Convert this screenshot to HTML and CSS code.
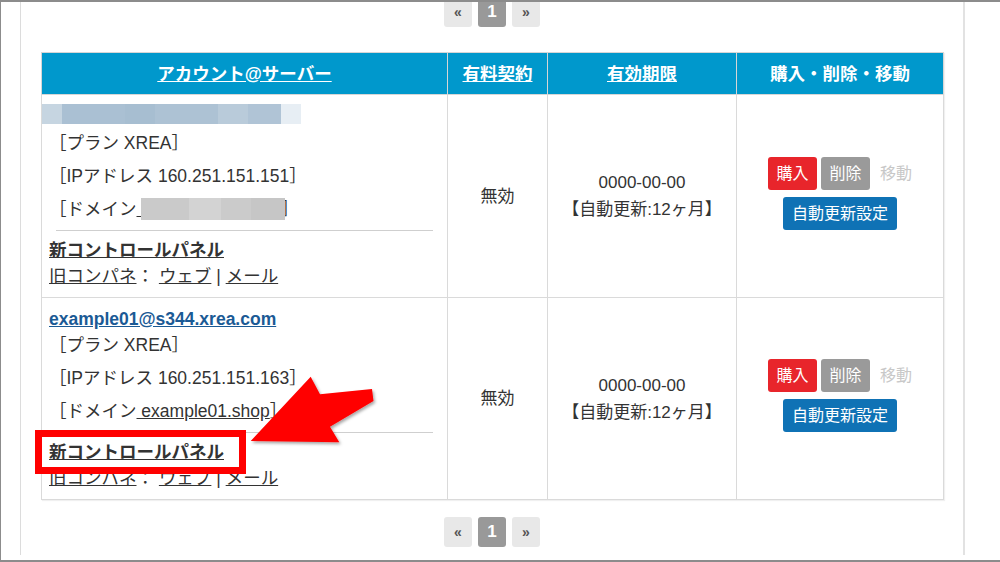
FILE: index.html
```html
<!DOCTYPE html>
<html lang="ja">
<head>
<meta charset="utf-8">
<title>アカウント一覧</title>
<link rel="stylesheet" href="styles.css">
</head>
<body>
<div class="frame">
  <div class="panel">
    <nav class="pager pager-top">
      <a class="page" href="#">«</a>
      <a class="page current" href="#">1</a>
      <a class="page" href="#">»</a>
    </nav>

    <table class="accounts">
      <colgroup>
        <col class="col-acc">
        <col class="col-paid">
        <col class="col-exp">
        <col class="col-act">
      </colgroup>
      <thead>
        <tr>
          <th><a href="#">アカウント@サーバー</a></th>
          <th><a href="#">有料契約</a></th>
          <th><a href="#">有効期限</a></th>
          <th>購入・削除・移動</th>
        </tr>
      </thead>
      <tbody>
        <tr>
          <td class="acc">
            <div class="acc-name"><span class="blur-name"></span></div>
            <ul class="info">
              <li>［プラン XREA］</li>
              <li>［IPアドレス 160.251.151.151］</li>
              <li>［ドメイン<a class="link" href="#"> <span class="blur-domain"></span></a>］</li>
            </ul>
            <hr class="sep">
            <div class="line"><a class="link strong" href="#">新コントロールパネル</a></div>
            <div class="line"><a class="link" href="#">旧コンパネ</a>： <a class="link" href="#">ウェブ</a> | <a class="link" href="#">メール</a></div>
          </td>
          <td class="mid">無効</td>
          <td class="mid">0000-00-00<br>【自動更新:12ヶ月】</td>
          <td class="mid">
            <div class="actions">
              <div class="btn-row">
                <span class="btn btn-red">購入</span>
                <span class="btn btn-gray">削除</span>
                <span class="muted">移動</span>
              </div>
              <span class="btn btn-blue">自動更新設定</span>
            </div>
          </td>
        </tr>
        <tr>
          <td class="acc">
            <div class="line"><a class="email" href="#">example01@s344.xrea.com</a></div>
            <ul class="info">
              <li>［プラン XREA］</li>
              <li>［IPアドレス 160.251.151.163］</li>
              <li>［ドメイン<a class="link" href="#"> example01.shop</a>］</li>
            </ul>
            <hr class="sep">
            <div class="line"><a class="link strong" href="#">新コントロールパネル</a></div>
            <div class="line"><a class="link" href="#">旧コンパネ</a>： <a class="link" href="#">ウェブ</a> | <a class="link" href="#">メール</a></div>
          </td>
          <td class="mid">無効</td>
          <td class="mid">0000-00-00<br>【自動更新:12ヶ月】</td>
          <td class="mid">
            <div class="actions">
              <div class="btn-row">
                <span class="btn btn-red">購入</span>
                <span class="btn btn-gray">削除</span>
                <span class="muted">移動</span>
              </div>
              <span class="btn btn-blue">自動更新設定</span>
            </div>
          </td>
        </tr>
      </tbody>
    </table>

    <nav class="pager pager-bottom">
      <a class="page" href="#">«</a>
      <a class="page current" href="#">1</a>
      <a class="page" href="#">»</a>
    </nav>
  </div>

  <svg class="callout" width="1000" height="562" viewBox="0 0 1000 562" aria-hidden="true">
    <defs>
      <filter id="shadow" x="-20%" y="-20%" width="140%" height="140%">
        <feDropShadow dx="1.5" dy="2" stdDeviation="1.5" flood-color="#000" flood-opacity="0.35"/>
      </filter>
    </defs>
    <polygon points="250.7,441 310.7,376.7 320,394.3 372,389 373.5,401 330,426.7 339.3,442.3" fill="#ff0000" filter="url(#shadow)"/>
    <rect x="38.5" y="433.5" width="204" height="37" fill="none" stroke="#ff0000" stroke-width="7"/>
  </svg>
</div>
</body>
</html>
```

FILE: styles.css
```css
* {
  box-sizing: border-box;
}

html,
body {
  margin: 0;
  padding: 0;
}

body {
  width: 1000px;
  height: 562px;
  overflow: hidden;
  background: #fff;
  font-family: "Liberation Sans", "Noto Sans CJK JP", sans-serif;
  color: #333;
}

.frame {
  position: relative;
  width: 1000px;
  height: 562px;
  border-top: 2px solid #8c8c8c;
  border-left: 1px solid #8c8c8c;
  border-bottom: 2px solid #8c8c8c;
  overflow: hidden;
}

.panel {
  margin-left: 19px;
  width: 945px;
  height: 100%;
  border-left: 1px solid #dcdcdc;
  border-right: 2px solid #e2e2e2;
  padding: 0 20px;
}

/* pagination */
.pager {
  display: flex;
  justify-content: center;
  gap: 6px;
}

.pager-top {
  margin-top: -5px;
}

.pager-bottom {
  margin-top: 17px;
}

.page {
  width: 28px;
  height: 30px;
  display: flex;
  align-items: center;
  justify-content: center;
  background: #e8e8e8;
  color: #555;
  font-size: 14px;
  font-weight: bold;
  border-radius: 3px;
  text-decoration: none;
}

.page.current {
  background: #999;
  color: #fff;
  font-size: 17px;
}

/* table */
.accounts {
  margin-top: 25px;
  width: 902px;
  border-collapse: collapse;
  table-layout: fixed;
  box-shadow: 1px 1px 1px rgba(0, 0, 0, 0.06);
}

.col-acc { width: 406px; }
.col-paid { width: 100px; }
.col-exp { width: 189px; }
.col-act { width: 207px; }

.accounts th {
  background: #0098cc;
  color: #fff;
  font-size: 17.5px;
  font-weight: bold;
  line-height: 24px;
  height: 42px;
  padding: 0 8px;
  border: 1px solid #d6d6d6;
  text-align: center;
}

.accounts th a {
  color: #fff;
  text-decoration: underline;
}

.accounts td {
  border: 1px solid #dadada;
  padding: 8px 7px;
}

.acc {
  vertical-align: top;
  text-align: left;
  font-size: 17.5px;
  line-height: 26px;
}

.mid {
  vertical-align: middle;
  text-align: center;
  font-size: 17px;
  line-height: 27px;
}

.acc-name {
  height: 26px;
}

.blur-name {
  display: block;
  width: 259px;
  height: 20px;
  margin: 1px 0 0 -7px;
  background: linear-gradient(90deg,
    #c6d5e1 0 20px,
    #aac0d3 20px 83px,
    #a7bed1 83px 113px,
    #adc2d4 113px 176px,
    #b9cbda 176px 206px,
    #b0c4d6 206px 239px,
    #e7eef4 239px 259px);
}

.blur-domain {
  position: relative;
  z-index: 1;
  display: inline-block;
  width: 144px;
  height: 22px;
  margin-right: -4px;
  vertical-align: -5px;
  background: linear-gradient(90deg,
    #cacaca 0 48px,
    #d3d3d3 48px 80px,
    #cbcbcb 80px 110px,
    #c6c6c6 110px 144px);
}

.info {
  list-style: none;
  margin: 0;
  padding: 0;
}

.info li + li {
  margin-top: 7px;
}

.sep {
  border: 0;
  border-top: 1px solid #cfcfcf;
  margin: 8px 7px 6px;
}

.link {
  color: #333;
  text-decoration: underline;
}

.strong {
  font-weight: bold;
}

.email {
  color: #1b5a95;
  font-weight: bold;
  text-decoration: underline;
}

/* actions */
.actions {
  display: flex;
  flex-direction: column;
  align-items: center;
  gap: 7px;
  margin-bottom: 6px;
}

.btn-row {
  display: flex;
  align-items: center;
  gap: 4px;
}

.btn {
  display: inline-block;
  font-size: 16px;
  line-height: 21px;
  padding: 6px 8.5px;
  border-radius: 3px;
  color: #fff;
}

.btn-red { background: #e8252b; }
.btn-gray { background: #9a9a9a; }
.btn-blue { background: #0f72b5; }

.muted {
  color: #c8c8c8;
  font-size: 16px;
  line-height: 21px;
  margin-left: 6px;
}

/* annotation overlay */
.callout {
  position: absolute;
  top: -2px;
  left: -1px;
  pointer-events: none;
}
```
